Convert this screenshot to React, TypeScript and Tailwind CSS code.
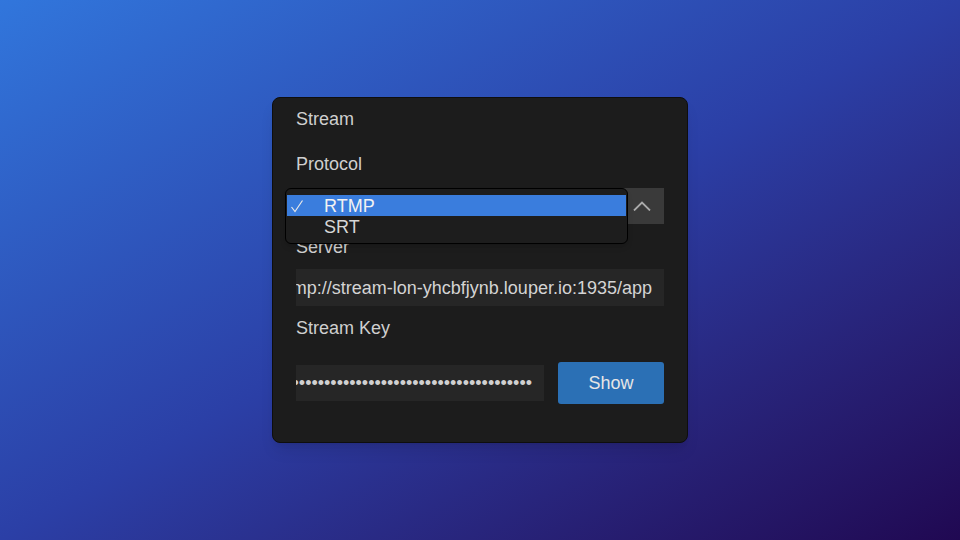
const URL_VALUE = 'rtmp://stream-lon-yhcbfjynb.louper.io:1935/app';
const KEY_DOTS = '•'.repeat(50);

const Chevron = () => (
  <svg width="18" height="10" viewBox="0 0 18 10" fill="none">
    <path d="M1 9.5 L9 1.5 L17 9.5" stroke="#ababab" strokeWidth="1.8" />
  </svg>
);

const Check = () => (
  <svg width="14" height="14" viewBox="0 0 14 14" fill="none">
    <path d="M1.5 8 L5 12.5 L12.5 1.5" stroke="#e8e8e8" strokeWidth="1.2" />
  </svg>
);

const options = ['RTMP', 'SRT'];

export default function App() {
  return (
    <div
      className="w-[960px] h-[540px] flex items-center justify-center bg-gradient-to-br from-[#3176dc] via-[#2b3fa6] to-[#200852]"
      style={{ fontFamily: '"Liberation Sans", Arial, sans-serif' }}
    >
      <div className="w-[416px] h-[346px] rounded-lg border border-[#0e0e0e] bg-[#1c1c1c] px-[23px] pt-[11px] text-[18px] leading-[20px] text-[#cfcfcf] shadow-lg">
        <div>Stream</div>
        <div className="mt-[25px]">Protocol</div>

        {/* protocol select, opened */}
        <div className="relative mt-[14px] flex h-9">
          <div className="flex-1 bg-[#262626]" />
          <div className="flex w-11 items-center justify-center bg-[#3a3a3a]">
            <Chevron />
          </div>
          <div className="absolute -left-[11px] top-0 w-[343px] h-[56px] rounded-md border border-black bg-[#1d1d1d] px-px py-[6px] shadow-md">
            {options.map((opt, i) => (
              <div
                key={opt}
                className={
                  i === 0
                    ? 'flex h-[21px] items-center bg-[#3a7ddd] text-[#f2f2f2]'
                    : 'flex h-[21px] items-center text-[#d6d6d6]'
                }
              >
                <div className="w-[37px] pl-[3px]">{i === 0 && <Check />}</div>
                <span>{opt}</span>
              </div>
            ))}
          </div>
        </div>

        <div className="mt-[13px]">Server</div>
        <div className="mt-3 flex h-[37px] items-center justify-end overflow-hidden whitespace-nowrap bg-[#262626] pr-3 text-[#d4d4d4]">
          <span>{URL_VALUE}</span>
        </div>

        <div className="mt-3">Stream Key</div>
        <div className="mt-6 flex h-[42px] items-center gap-[14px]">
          <div className="flex h-9 flex-1 items-center justify-end overflow-hidden whitespace-nowrap bg-[#262626] pr-3 text-[18px] text-[#d0d0d0]">
            <span>{KEY_DOTS}</span>
          </div>
          <button className="h-[42px] w-[106px] rounded-[3px] bg-[#2b70b5] text-[#e6e6e6]">
            Show
          </button>
        </div>
      </div>
    </div>
  );
}
